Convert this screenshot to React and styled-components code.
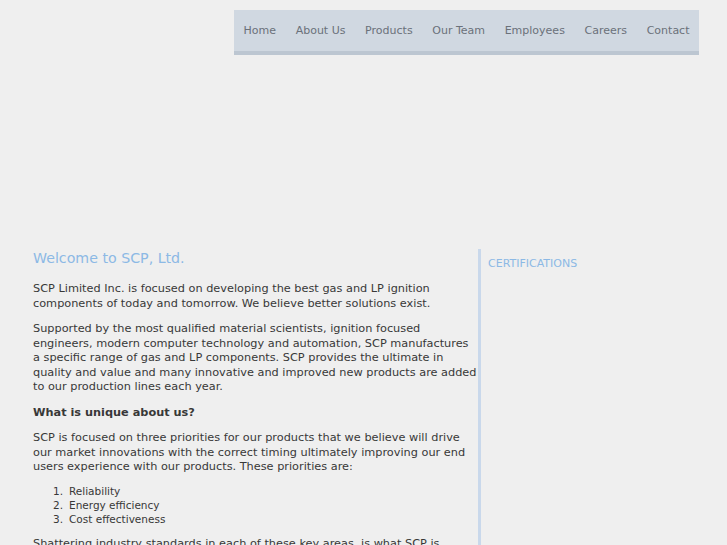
import React from 'react'
import styled, { createGlobalStyle } from 'styled-components'

const GlobalStyle = createGlobalStyle`
	html, body {
		margin: 0;
		padding: 0;
		background: #efefef;
		font-family: "DejaVu Sans", Verdana, sans-serif;
		color: #383838;
	}
`

const Page = styled.div`
	width: 727px;
	height: 545px;
	overflow: hidden;
`

const Header = styled.div`
	display: flex;
	justify-content: flex-end;
	padding: 10px 28px 0 0;
	height: 239px;
	box-sizing: border-box;
`

const Nav = styled.ul`
	display: flex;
	justify-content: space-between;
	list-style: none;
	margin: 0;
	padding: 0 0.5px;
	width: 465px;
	height: 45px;
	box-sizing: border-box;
	background: #d0d8e1;
	border-bottom: 4px solid #bcc6d1;
`

const NavItem = styled.li`
	display: flex;
	align-items: center;
	padding: 0 9px;
	font-size: 11px;
	color: #6b717a;
`

const Main = styled.div`
	display: flex;
	padding: 0 0 0 33px;
`

const Content = styled.div`
	width: 444px;
	padding-top: 10px;
	font-size: 11.3px;
	line-height: 14.5px;
`

const Title = styled.h1`
	margin: 0 0 15px;
	font-size: 14.2px;
	font-weight: normal;
	line-height: 18px;
	color: #8cb9e5;
`

const Para = styled.p`
	margin: 0 0 ${ props => props.tight ? '9px' : '11px' };
	font-weight: ${ props => props.bold ? 'bold' : 'normal' };
`

const List = styled.ol`
	margin: 0 0 11px;
	padding-left: 36px;
	list-style: none;
	counter-reset: item;
	font-size: 10.5px;
	line-height: 14px;
`

const ListItem = styled.li`
	counter-increment: item;
	&::before {
		content: counter(item) ".";
		display: inline-block;
		width: 16px;
		margin-left: -16px;
	}
`

const Sidebar = styled.div`
	margin: 10px 0 0 1px;
	border-left: 3px solid #c9d8eb;
	padding: 8px 0 0 7px;
	min-height: 320px;
`

const SideTitle = styled.h3`
	margin: 0;
	font-size: 11px;
	font-weight: normal;
	line-height: 14px;
	color: #8cb9e5;
`

const links = [ 'Home', 'About Us', 'Products', 'Our Team', 'Employees', 'Careers', 'Contact' ]

export default function App() {
	return (
		<Page>
			<GlobalStyle />
			<Header>
				<Nav>
					{ links.map( link => <NavItem key={ link }>{ link }</NavItem> ) }
				</Nav>
			</Header>
			<Main>
				<Content>
					<Title>Welcome to SCP, Ltd.</Title>
					<Para>
						SCP Limited Inc. is focused on developing the best gas and LP ignition
						components of today and tomorrow. We believe better solutions exist.
					</Para>
					<Para>
						Supported by the most qualified material scientists, ignition focused
						engineers, modern computer technology and automation, SCP manufactures
						a specific range of gas and LP components. SCP provides the ultimate in
						quality and value and many innovative and improved new products are added
						to our production lines each year.
					</Para>
					<Para bold>What is unique about us?</Para>
					<Para tight>
						SCP is focused on three priorities for our products that we believe will drive
						our market innovations with the correct timing ultimately improving our end
						users experience with our products. These priorities are:
					</Para>
					<List>
						<ListItem>Reliability</ListItem>
						<ListItem>Energy efficiency</ListItem>
						<ListItem>Cost effectiveness</ListItem>
					</List>
					<Para>
						Shattering industry standards in each of these key areas, is what SCP is
						committed to achieving for our customers.
					</Para>
				</Content>
				<Sidebar>
					<SideTitle>CERTIFICATIONS</SideTitle>
				</Sidebar>
			</Main>
		</Page>
	)
}
